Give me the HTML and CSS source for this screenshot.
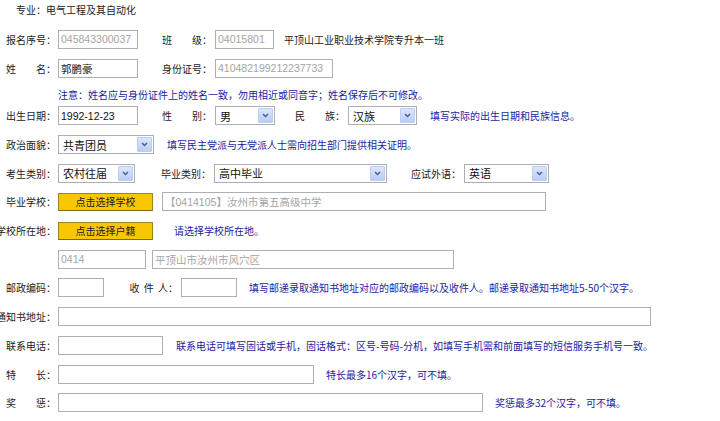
FILE: index.html
```html
<!DOCTYPE html>
<html lang="zh-CN">
<head>
    <meta charset="UTF-8">
    <title>报名信息</title>
    <link rel="stylesheet" href="styles.css">
</head>
<body>
    <div class="form">
        <div class="major">专业：电气工程及其自动化</div>

        <div class="row">
            <span class="lbl">报名序号：</span>
            <input class="inp dim w80" value="045843300037" readonly>
            <span class="lbl lbl-mid ml24">班　　级：</span>
            <input class="inp dim w59" value="04015801" readonly>
            <span class="ml10">平顶山工业职业技术学院专升本一班</span>
        </div>
        <div class="row">
            <span class="lbl">姓　　名：</span>
            <input class="inp w80" value="郭鹏豪">
            <span class="lbl lbl-mid ml24">身份证号：</span>
            <input class="inp dim w118" value="410482199212237733" readonly>
        </div>
        <div class="row-note note">注意：姓名应与身份证件上的姓名一致，勿用相近或同音字；姓名保存后不可修改。</div>

        <div class="row row-s">
            <span class="lbl">出生日期：</span>
            <input class="inp w80" value="1992-12-23">
            <span class="lbl lbl-mid ml24">性　　别：</span>
            <div class="sel w60"><span>男</span><span class="arrow"><svg width="7" height="5" viewBox="0 0 7 5"><path d="M1 1 L3.5 3.6 L6 1" fill="none" stroke="#4a5f86" stroke-width="1.4"/></svg></span></div>
            <span class="lbl lbl-mid ml20">民　　族：</span>
            <div class="sel w69"><span>汉族</span><span class="arrow"><svg width="7" height="5" viewBox="0 0 7 5"><path d="M1 1 L3.5 3.6 L6 1" fill="none" stroke="#4a5f86" stroke-width="1.4"/></svg></span></div>
            <span class="note ml13">填写实际的出生日期和民族信息。</span>
        </div>
        <div class="row row-s">
            <span class="lbl">政治面貌：</span>
            <div class="sel w96"><span>共青团员</span><span class="arrow"><svg width="7" height="5" viewBox="0 0 7 5"><path d="M1 1 L3.5 3.6 L6 1" fill="none" stroke="#4a5f86" stroke-width="1.4"/></svg></span></div>
            <span class="note ml13">填写民主党派与无党派人士需向招生部门提供相关证明。</span>
        </div>
        <div class="row row-s">
            <span class="lbl">考生类别：</span>
            <div class="sel w77"><span>农村往届</span><span class="arrow"><svg width="7" height="5" viewBox="0 0 7 5"><path d="M1 1 L3.5 3.6 L6 1" fill="none" stroke="#4a5f86" stroke-width="1.4"/></svg></span></div>
            <span class="lbl lbl-mid ml26">毕业类别：</span>
            <div class="sel w173"><span>高中毕业</span><span class="arrow"><svg width="7" height="5" viewBox="0 0 7 5"><path d="M1 1 L3.5 3.6 L6 1" fill="none" stroke="#4a5f86" stroke-width="1.4"/></svg></span></div>
            <span class="lbl lbl-mid ml24">应试外语：</span>
            <div class="sel w85"><span>英语</span><span class="arrow"><svg width="7" height="5" viewBox="0 0 7 5"><path d="M1 1 L3.5 3.6 L6 1" fill="none" stroke="#4a5f86" stroke-width="1.4"/></svg></span></div>
        </div>
        <div class="row row-s">
            <span class="lbl">毕业学校：</span>
            <button class="pick">点击选择学校</button>
            <input class="inp dim w384 ml9" value="【0414105】汝州市第五高级中学" readonly>
        </div>
        <div class="row row-s">
            <span class="lbl">学校所在地：</span>
            <button class="pick">点击选择户籍</button>
            <span class="note ml21">请选择学校所在地。</span>
        </div>
        <div class="row row-s">
            <span class="lbl"></span>
            <input class="inp dim w88" value="0414" readonly>
            <input class="inp dim w302 ml6" value="平顶山市汝州市风穴区" readonly>
        </div>
        <div class="row row-s">
            <span class="lbl">邮政编码：</span>
            <input class="inp w46">
            <span class="lbl lbl-mid ml24 spaced">收 件 人：</span>
            <input class="inp w56">
            <span class="note ml12">填写邮递录取通知书地址对应的邮政编码以及收件人。邮递录取通知书地址5-50个汉字。</span>
        </div>
        <div class="row row-s">
            <span class="lbl">通知书地址：</span>
            <input class="inp w593">
        </div>
        <div class="row row-s">
            <span class="lbl">联系电话：</span>
            <input class="inp w105">
            <span class="note ml13">联系电话可填写固话或手机，固话格式：区号-号码-分机，如填写手机需和前面填写的短信服务手机号一致。</span>
        </div>
        <div class="row row-s">
            <span class="lbl">特　　长：</span>
            <input class="inp w256">
            <span class="note ml12">特长最多16个汉字，可不填。</span>
        </div>
        <div class="row row-s">
            <span class="lbl">奖　　惩：</span>
            <input class="inp w425">
            <span class="note ml12">奖惩最多32个汉字，可不填。</span>
        </div>
    </div>
</body>
</html>
```

FILE: styles.css
```css
* {
    margin: 0;
    padding: 0;
    box-sizing: border-box;
}
body {
    background-color: #fff;
    font-family: "Noto Sans CJK SC", sans-serif;
    font-size: 10px;
    color: #222;
}
.major {
    height: 20px;
    line-height: 20px;
    padding-left: 16px;
    margin-bottom: 4.5px;
}
.row {
    display: flex;
    align-items: center;
    height: 29px;
    white-space: nowrap;
}
.row-s {
    height: 28.7px;
}
.row-note {
    height: 19px;
    padding: 4px 0 0 58px;
    line-height: 15px;
    white-space: nowrap;
}
.lbl {
    flex: none;
    width: 58px;
    padding-right: 2px;
    display: flex;
    justify-content: flex-end;
    white-space: nowrap;
}
.lbl-mid {
    width: 53px;
    padding-right: 3px;
}
.spaced {
    word-spacing: 2px;
}
.note {
    color: #1c1c9e;
    white-space: nowrap;
}
.inp {
    flex: none;
    height: 19px;
    border: 1px solid #a9b0b6;
    padding: 0 2px;
    font-family: "Liberation Sans", "Noto Sans CJK SC", sans-serif;
    font-size: 10.5px;
    color: #111;
    background-color: #fff;
    outline: none;
}
.dim {
    color: #a4a4a4;
}
.sel {
    flex: none;
    display: flex;
    align-items: center;
    justify-content: space-between;
    height: 19px;
    border: 1px solid #a9b0b6;
    padding: 0 1px 0 4px;
    font-size: 11px;
    color: #111;
    background-color: #fff;
}
.arrow {
    width: 15px;
    height: 15px;
    display: flex;
    align-items: center;
    justify-content: center;
    border: 1px solid #bccdf2;
    border-radius: 1px;
    background: linear-gradient(#dbe6fe, #bacdf7);
}
.pick {
    flex: none;
    width: 95px;
    height: 18px;
    background-color: #f7c700;
    border: 1px solid #9b8626;
    border-bottom-color: #7d6b16;
    font-family: "Noto Sans CJK SC", sans-serif;
    font-size: 10px;
    color: #222;
    cursor: pointer;
}
.w46 { width: 46px; }
.w56 { width: 56px; }
.w59 { width: 59px; }
.w60 { width: 60px; }
.w69 { width: 69px; }
.w77 { width: 77px; }
.w80 { width: 80px; }
.w85 { width: 85px; }
.w88 { width: 88px; }
.w96 { width: 96px; }
.w105 { width: 105px; }
.w118 { width: 118px; }
.w173 { width: 173px; }
.w256 { width: 256px; }
.w302 { width: 302px; }
.w384 { width: 384px; }
.w425 { width: 425px; }
.w593 { width: 593px; }
.ml6 { margin-left: 6px; }
.ml9 { margin-left: 9px; }
.ml10 { margin-left: 10px; }
.ml12 { margin-left: 12px; }
.ml13 { margin-left: 13px; }
.ml20 { margin-left: 20px; }
.ml21 { margin-left: 21px; }
.ml24 { margin-left: 24px; }
.ml26 { margin-left: 26px; }
```
